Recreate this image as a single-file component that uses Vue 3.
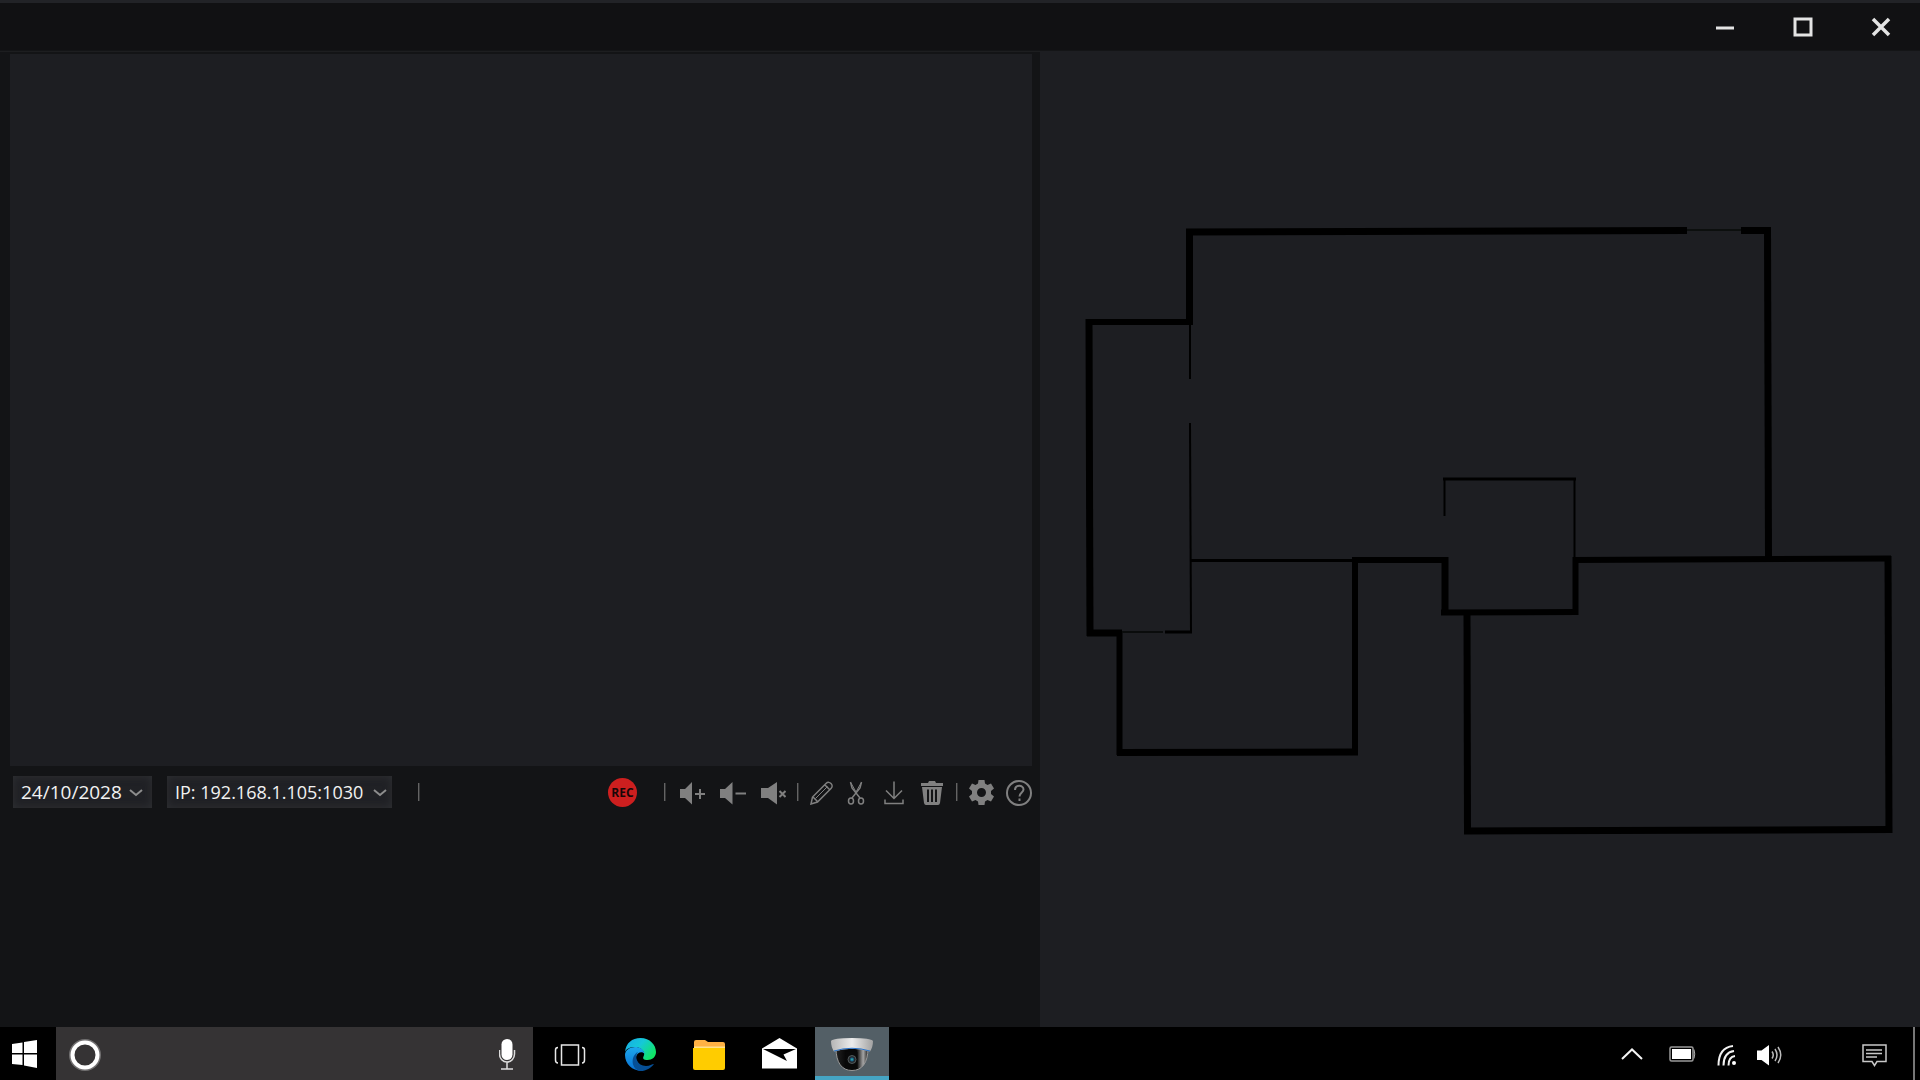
<script setup>
import { ref } from 'vue'

const date = ref('24/10/2028')
const address = ref('IP: 192.168.1.105:1030')
const query = ref('')

// Each wall runs from (x1, y1) to (x2, y2) with line width w
const walls = [
  [1186, 232, 1687, 230.5, 7],
  [1741, 230.5, 1771, 230.5, 7],
  [1767.5, 227, 1768.5, 560, 7],
  [1189.5, 229, 1189.5, 325, 7],
  [1086, 322, 1193, 322, 6],
  [1089, 319, 1090, 636, 7],
  [1087, 633, 1122, 633, 7],
  [1165, 632, 1192, 632, 3],
  [1190, 325, 1190, 379, 2],
  [1190, 423, 1191, 633, 2],
  [1191, 560.5, 1353, 560.5, 3],
  [1355, 557, 1355, 755, 6],
  [1117, 752.5, 1358, 752, 7],
  [1119.5, 633, 1119.5, 755, 6],
  [1352, 560, 1448, 560, 6],
  [1445, 557, 1445, 615, 7],
  [1441, 612.5, 1578, 612, 6],
  [1575.5, 557, 1575.5, 615, 6],
  [1573, 560, 1891, 558.5, 6],
  [1443, 479, 1576, 479, 3],
  [1444.5, 478, 1444.5, 516, 2],
  [1574.5, 478, 1574.5, 558, 2],
  [1467, 612, 1467.5, 834, 7],
  [1464, 831, 1892, 829.5, 7],
  [1888, 556, 1889, 833, 7],
]
</script>

<template>
  <div class="screen">
    <header class="titlebar">
      <button class="win" aria-label="Minimise">
        <svg width="20" height="20"><path d="M1 11H19" stroke-width="3" /></svg>
      </button>
      <button class="win" aria-label="Maximise">
        <svg width="20" height="20"><rect x="2" y="2" width="16" height="16" fill="none" stroke-width="3" /></svg>
      </button>
      <button class="win" aria-label="Close">
        <svg width="20" height="20"><path d="M2 2L18 18M18 2L2 18" stroke-width="3.500" /></svg>
      </button>
    </header>

    <main class="workspace">
      <section class="left">
        <div class="video"></div>
        <div class="toolbar">
          <div class="picker date">
            <select v-model="date" aria-label="Date"><option>24/10/2028</option></select>
            <svg width="14" height="8"><path d="M1 1L7 6L13 1" /></svg>
          </div>
          <div class="picker address">
            <select v-model="address" aria-label="Camera address"><option>IP: 192.168.1.105:1030</option></select>
            <svg width="14" height="8"><path d="M1 1L7 6L13 1" /></svg>
          </div>
          <span class="sep first"></span>

          <div class="tools">
            <button class="rec">REC</button>
            <span class="sep wide"></span>
            <div class="group sound">
              <button aria-label="Volume up">
                <svg width="26" height="26"><path class="solid" d="M0 10H5L12 3V25.500L5 19H0Z" /><path d="M15 15H25M20 10V20" stroke-width="2" /></svg>
              </button>
              <button aria-label="Volume down">
                <svg width="26" height="26"><path class="solid" d="M0 10H5L12.500 3V25.500L5 19H0Z" /><path d="M15.500 14.500H26" stroke-width="2" /></svg>
              </button>
              <button aria-label="Mute">
                <svg width="26" height="26"><path class="solid" d="M1 9H8L17 3V25.500L8 19H1Z" /><path d="M19.500 12L25.500 18M25.500 12L19.500 18" stroke-width="2" /></svg>
              </button>
            </div>
            <span class="sep"></span>
            <div class="group edit">
              <button aria-label="Edit">
                <svg width="24" height="26"><path d="M1 25L2.500 18L16 4.500C18 2.500 20 3.500 21 4.500C22.500 6 22.500 8 21 9.500L7.500 23ZM3 18L7.500 22.500M15 6L19.500 10.500" stroke-width="1.500" /><path d="M5.500 19.500L17.500 7.500" stroke-width="1" /></svg>
              </button>
              <button aria-label="Cut">
                <svg width="24" height="26"><path d="M3.500 3L5 9L13 19M14.500 3L13 9L5 19" stroke-width="1.500" /><path d="M4 4L9 13M14 4L9 13" stroke-width="1" /><ellipse cx="4" cy="22" rx="2.500" ry="3" stroke-width="1.500" /><ellipse cx="14" cy="22" rx="2.500" ry="3" stroke-width="1.500" /></svg>
              </button>
              <button aria-label="Download">
                <svg width="24" height="26"><path d="M10 2.500V19M2 11.500L10 19.500L18 11.500M1 20.500V24.500H19V20.500" stroke-width="1.500" /></svg>
              </button>
              <button aria-label="Delete">
                <svg width="24" height="26"><path class="solid" d="M0 4H7L8 2H14L15 4H22V7H0ZM1 8H21L19 24Q18.500 26 17 26H5Q3.500 26 3 24Z" /><path d="M7 10.500V23M11 10.500V23M15 10.500V23" class="slot" stroke-width="2" /></svg>
              </button>
            </div>
            <span class="sep"></span>
            <div class="group system">
              <button aria-label="Settings">
                <svg width="26" height="26"><path class="solid" fill-rule="evenodd" d="M9.500 1H15.500L16 4.500L18.500 6L22 4.500L25 9.500L22 12V15L25 17.500L22 22.500L18.500 21L16 22.500L15.500 26H9.500L9 22.500L6.500 21L3 22.500L0 17.500L3 15V12L0 9.500L3 4.500L6.500 6L9 4.500ZM12.500 9A4.500 4.500 0 1 0 12.500 18A4.500 4.500 0 1 0 12.500 9Z" /></svg>
              </button>
              <button aria-label="Help">
                <svg width="26" height="27"><circle cx="13" cy="14" r="12" stroke-width="2" /><path d="M9 11C9 5.500 17.500 5.500 17.500 10.500C17.500 13.500 13.500 13.500 13.500 17.500M13.500 19.500V22" stroke-width="2" /></svg>
              </button>
            </div>
          </div>
        </div>
        <div class="timeline"></div>
      </section>

      <section class="map">
        <svg viewBox="1040 51 880 976" role="img" aria-label="Floor plan">
          <line v-for="([x1, y1, x2, y2, w], i) in walls" :key="i" :x1="x1" :y1="y1" :x2="x2" :y2="y2" :stroke-width="w" stroke="#000" />
          <path d="M1687 230H1741" stroke="#0c0f0e" stroke-width="2" />
          <path d="M1122 632H1163" stroke="#050706" stroke-width="1.500" />
        </svg>
      </section>
    </main>

    <footer class="taskbar">
      <button class="start" aria-label="Start">
        <svg width="26" height="28"><path fill="#fff" d="M0 4L10.500 2.500V13H0ZM12 2L25 0V13H12ZM0 14.500H10.500V25L0 24ZM12 14.500H25V28L12 25.500Z" /></svg>
      </button>
      <label class="search">
        <svg width="34" height="34"><circle cx="17" cy="18" r="14" fill="none" stroke="#fff" stroke-opacity=".3" stroke-width="4" /><circle cx="17" cy="18" r="12.500" fill="none" stroke="#fff" stroke-width="4" /></svg>
        <input v-model="query" type="text" aria-label="Search" />
        <svg width="18" height="32"><rect x="2.500" y="1" width="11" height="21" rx="5.500" fill="#fff" /><path d="M.500 12V16A7.500 8 0 0 0 15.500 16V12M8 24V31M2 31H14" fill="none" stroke="#ddd" stroke-width="1.500" /></svg>
      </label>
      <nav class="apps">
        <button aria-label="Task view">
          <svg width="34" height="34"><g fill="none" stroke="#e8e8e8" stroke-width="1.500"><rect x="8.500" y="8" width="17" height="20" /><path d="M5 10.500C3 10.500 2.500 11.500 2.500 13V23C2.500 25 3 26 5 26M29 10.500C31 10.500 31.500 11.500 31.500 13V23C31.500 25 31 26 29 26" /></g></svg>
        </button>
        <button aria-label="Edge">
          <svg width="34" height="34" viewBox="0 0 34 34">
            <defs>
              <linearGradient id="edgeTop" x1="0" y1="0" x2="1" y2=".6"><stop offset="0" stop-color="#18a9e8" /><stop offset=".5" stop-color="#15c8d8" /><stop offset="1" stop-color="#10e565" /></linearGradient>
              <linearGradient id="edgeSide" x1="0" y1="0" x2="0" y2="1"><stop offset="0" stop-color="#1da8ee" /><stop offset="1" stop-color="#0870d3" /></linearGradient>
            </defs>
            <path fill="url(#edgeTop)" d="M2 15C3 6 9 1 17.500 1C27 1 33 8 33 15C33 20 29 23 24.500 23C20.500 23 19.500 21.500 20.500 19.500C23 16 19 10 12 10C7 10 3 12 2 15Z" />
            <path fill="url(#edgeSide)" d="M2 18C2 13 7 10 12 10C17 10 21 12.500 21.500 17C20 14 14 14.500 13 20C12 26 16 32 21 33.500C11 35 2 28 2 18Z" />
            <path fill="#064f96" d="M15 15C11 19 14 29 23 29C27 29 29 27 31 27C28 31 23 34 18 34C8 33 7 19 15 15Z" />
          </svg>
        </button>
        <button aria-label="Files">
          <svg width="34" height="34"><path fill="#ffb144" d="M1 5Q1 3 3 3H12L15 5H30Q32 5 32 7V12H1Z" /><path fill="#ffe08c" d="M1 9.500H32V12H1Z" /><path fill="#ffcc00" d="M0 11H32V31Q32 33 30 33H2Q0 33 0 31Z" /></svg>
        </button>
        <button aria-label="Mail">
          <svg width="36" height="34"><path fill="#fff" d="M0 11.500L17.500 1L35 11.500V31.500H0Z" /><path d="M1 12H34L21.500 17.500L25 24L17 20Z" /></svg>
        </button>
        <button class="active" aria-label="Camera viewer">
          <svg width="42" height="34" viewBox="0 0 42 34">
            <defs>
              <linearGradient id="domeCap" x1="0" x2="1"><stop offset="0" stop-color="#b5b5b5" /><stop offset=".5" stop-color="#ececec" /><stop offset="1" stop-color="#a2a2a2" /></linearGradient>
              <linearGradient id="domeGlass" x1="0" x2="1"><stop offset="0" stop-color="#222" /><stop offset=".3" stop-color="#080808" /><stop offset=".65" stop-color="#080808" /><stop offset=".85" stop-color="#a5a5a5" /><stop offset="1" stop-color="#222" /></linearGradient>
            </defs>
            <path fill="url(#domeGlass)" stroke="#999" d="M5 11C5 26 11 33.500 21 33.500C31 33.500 37 26 37 11Z" />
            <path fill="url(#domeCap)" d="M0 4Q2 1 21 1Q40 1 42 4Q42 10 39 14.500Q21 9 3 14.500Q0 10 0 4Z" />
            <path d="M3 14Q21 8.500 39 14" fill="none" stroke="#2872c9" />
            <path d="M15 15H27V32H15Z" fill="#090909" opacity=".5" />
            <circle cx="21" cy="22.500" r="4" fill="#252a2d" stroke="#50585a" /><circle cx="21" cy="22.500" r="2" fill="#126497" /><circle cx="21" cy="22.500" r="1" fill="#37a78d" />
          </svg>
        </button>
      </nav>
      <div class="tray">
        <button aria-label="Show hidden icons"><svg width="26" height="24"><path d="M1 17L11 7.500L21 17" fill="none" stroke="#f4f4f4" stroke-width="2" /></svg></button>
        <button aria-label="Battery"><svg width="30" height="24"><rect x="3" y="5" width="23" height="14" rx="1.500" fill="none" stroke="#999" stroke-width="1.500" /><rect x="5" y="7" width="19" height="10" fill="#fff" /><path d="M27 7.500Q28.500 12 27 16.500" fill="none" stroke="#aaa" /></svg></button>
        <button aria-label="Network"><svg width="20" height="24"><g fill="none" stroke="#f2f2f2" stroke-width="2"><path d="M1.500 23.500C1.500 11.500 7 5 16 4M6.500 23.500C6.500 15.500 10 10 17 9M11.500 23.500C11.500 17.500 14 14.500 18 14" /></g><circle cx="17" cy="21" r="2" fill="#fff" /></svg></button>
        <button aria-label="Volume"><svg width="28" height="24"><path fill="#fff" d="M0 8.500H4.500L12 3V23.500L4.500 18H0Z" /><g fill="none" stroke="#bbb" stroke-width="1.500"><path d="M15 9.500Q17.500 13 15 16.500M18 7Q22 13 18 19M21 5Q26.500 13 21 21" /></g></svg></button>
        <button class="notes" aria-label="Notifications"><svg width="26" height="26"><path d="M1 4H24V20.500H15L12.500 24.500L10 20.500H1ZM4 9H20M4 12.500H20M4 16H15" fill="none" stroke="#c8c8c8" stroke-width="1.500" /></svg></button>
        <button class="desktop" aria-label="Show desktop"></button>
      </div>
    </footer>
  </div>
</template>

<style>
body {
  background: #131416;
}
</style>

<style scoped>
.screen {
  display: flex;
  flex-direction: column;
  min-height: 100vh;
  font-family: "Open Sans", "Noto Sans", sans-serif;
  background: #131416;
}
button {
  display: flex;
  align-items: center;
  justify-content: center;
  padding: 0;
  border: 0;
  background: none;
  color: inherit;
  font-family: inherit;
}
svg {
  display: block;
}
.titlebar {
  display: flex;
  justify-content: flex-end;
  height: 51px;
  box-sizing: border-box;
  background: #111113;
  border-top: 3px solid #222327;
  border-bottom: 1px solid #141517;
}
.win {
  width: 78px;
}
.win svg {
  stroke: #e4e4e4;
}
.workspace {
  flex: 1;
  display: grid;
  grid-template-columns: 13fr 11fr;
}
.left {
  display: flex;
  flex-direction: column;
  box-sizing: border-box;
  padding: 2px 8px 0 10px;
  border-top: 1px solid #1d1e20;
  background: #131416;
}
.video {
  flex: 712;
  background: #1d1e22;
}
.timeline {
  flex: 209;
}
.toolbar {
  display: flex;
  align-items: center;
  gap: 15px;
  height: 52px;
  padding-left: 3px;
}
.picker {
  position: relative;
}
.picker svg {
  position: absolute;
  right: 5px;
  top: 13px;
  fill: none;
  stroke: #8d8d8d;
  stroke-width: 2;
  pointer-events: none;
}
.date svg {
  right: 9px;
}
select {
  appearance: none;
  display: block;
  width: 100%;
  height: 32px;
  padding: 0 0 0 8px;
  border: 0;
  border-radius: 0;
  color: #f2f2f2;
  font-family: inherit;
  font-size: inherit;
  background: #202125;
  box-shadow: inset 0 0 8px #303134;
}
.date {
  width: 139px;
  font-size: 19px;
}
.address {
  width: 225px;
  font-size: 18px;
}
.sep {
  width: 1px;
  height: 18px;
  margin: 0 11px;
  border-right: 1px solid #343536;
  background: #646464;
}
.tools {
  display: flex;
  align-items: center;
  margin-left: auto;
}
.tools .wide {
  margin: 0 14px 0 27px;
}
.group {
  display: flex;
}
.group svg {
  fill: none;
  stroke: #808080;
}
.group .solid {
  fill: #808080;
  stroke: none;
}
.group .slot {
  stroke: #131416;
}
.sound {
  gap: 14px;
}
.edit {
  gap: 13px;
}
.system {
  gap: 11px;
}
.rec {
  width: 29px;
  height: 29px;
  border-radius: 50%;
  background: #cd1f1f;
  color: #170708;
  font-size: 12px;
  font-weight: 700;
}
.map {
  background: #1d1e22;
}
.map svg {
  width: 100%;
}
.taskbar {
  display: flex;
  height: 53px;
  background: #000;
}
.start {
  width: 56px;
  padding-right: 7px;
}
.search {
  display: flex;
  align-items: center;
  flex: 0 1 477px;
  box-sizing: border-box;
  padding: 0 16px 0 12px;
  background: #353334;
}
.search input {
  flex: 1;
  min-width: 0;
  border: 0;
  outline: 0;
  background: none;
  color: #fff;
  font: inherit;
}
.apps {
  display: flex;
  margin-left: 2px;
}
.apps button {
  width: 70px;
}
.apps .active {
  width: 74px;
  box-sizing: border-box;
  padding-top: 4px;
  border-bottom: 4px solid #45a5c4;
  background: #535f66;
}
.tray {
  display: flex;
  gap: 20px;
  margin-left: auto;
}
.notes {
  margin-left: 57px;
}
.desktop {
  width: 7px;
  margin-left: 5px;
  border-left: 2px solid #777;
}
</style>
